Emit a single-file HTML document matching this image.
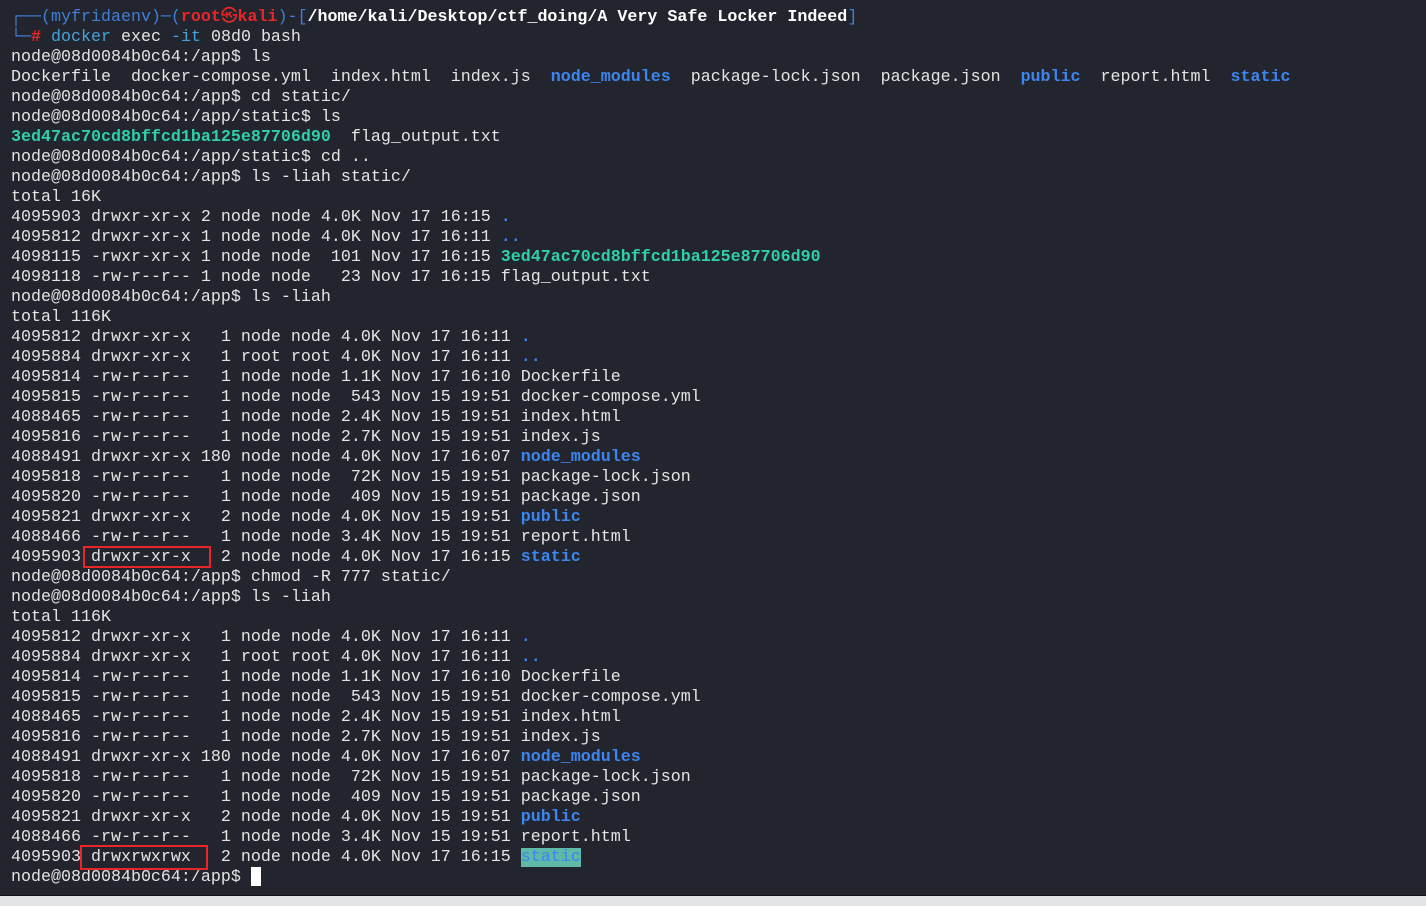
<!DOCTYPE html>
<html><head><meta charset="utf-8"><style>
html,body{margin:0;padding:0;}
body{width:1426px;height:906px;background:#e3e4e5;position:relative;overflow:hidden;}
#t{position:absolute;left:0;top:0;width:1426px;height:895px;background:#23252e;border-bottom:1px solid #111318;}
pre{position:absolute;left:11px;top:8px;margin:0;font-family:"Liberation Mono","DejaVu Sans Mono","Noto Sans CJK SC",monospace;font-size:16.67px;line-height:20px;color:#e4e4e4;white-space:pre;}
.b{color:#3b86f0;font-weight:bold}
.g{color:#2fd0a4;font-weight:bold}
.bl{color:#3f7fd6}
.r{color:#e8262a;font-weight:bold}
.w{color:#fff;font-weight:bold}
.c{color:#44a3d8}
.box{position:absolute;border:2px solid #e8262a;box-sizing:border-box;}
.hl{background:#5fb9a6;color:#3b86f0}
.cur{position:absolute;left:251px;top:867px;width:10px;height:19px;background:#fff;}
</style></head><body>
<div id="t"></div>
<pre><span class="bl">┌──(myfridaenv)─(</span><span class="r">root㉿kali</span><span class="bl">)-[</span><span class="w">/home/kali/Desktop/ctf_doing/A Very Safe Locker Indeed</span><span class="bl">]</span>
<span class="bl">└─</span><span class="r">#</span> <span class="c">docker</span> exec <span class="c">-it</span> 08d0 bash
node@08d0084b0c64:/app$ ls
Dockerfile  docker-compose.yml  index.html  index.js  <span class="b">node_modules</span>  package-lock.json  package.json  <span class="b">public</span>  report.html  <span class="b">static</span>
node@08d0084b0c64:/app$ cd static/
node@08d0084b0c64:/app/static$ ls
<span class="g">3ed47ac70cd8bffcd1ba125e87706d90</span>  flag_output.txt
node@08d0084b0c64:/app/static$ cd ..
node@08d0084b0c64:/app$ ls -liah static/
total 16K
4095903 drwxr-xr-x 2 node node 4.0K Nov 17 16:15 <span class="b">.</span>
4095812 drwxr-xr-x 1 node node 4.0K Nov 17 16:11 <span class="b">..</span>
4098115 -rwxr-xr-x 1 node node  101 Nov 17 16:15 <span class="g">3ed47ac70cd8bffcd1ba125e87706d90</span>
4098118 -rw-r--r-- 1 node node   23 Nov 17 16:15 flag_output.txt
node@08d0084b0c64:/app$ ls -liah
total 116K
4095812 drwxr-xr-x   1 node node 4.0K Nov 17 16:11 <span class="b">.</span>
4095884 drwxr-xr-x   1 root root 4.0K Nov 17 16:11 <span class="b">..</span>
4095814 -rw-r--r--   1 node node 1.1K Nov 17 16:10 Dockerfile
4095815 -rw-r--r--   1 node node  543 Nov 15 19:51 docker-compose.yml
4088465 -rw-r--r--   1 node node 2.4K Nov 15 19:51 index.html
4095816 -rw-r--r--   1 node node 2.7K Nov 15 19:51 index.js
4088491 drwxr-xr-x 180 node node 4.0K Nov 17 16:07 <span class="b">node_modules</span>
4095818 -rw-r--r--   1 node node  72K Nov 15 19:51 package-lock.json
4095820 -rw-r--r--   1 node node  409 Nov 15 19:51 package.json
4095821 drwxr-xr-x   2 node node 4.0K Nov 15 19:51 <span class="b">public</span>
4088466 -rw-r--r--   1 node node 3.4K Nov 15 19:51 report.html
4095903 drwxr-xr-x   2 node node 4.0K Nov 17 16:15 <span class="b">static</span>
node@08d0084b0c64:/app$ chmod -R 777 static/
node@08d0084b0c64:/app$ ls -liah
total 116K
4095812 drwxr-xr-x   1 node node 4.0K Nov 17 16:11 <span class="b">.</span>
4095884 drwxr-xr-x   1 root root 4.0K Nov 17 16:11 <span class="b">..</span>
4095814 -rw-r--r--   1 node node 1.1K Nov 17 16:10 Dockerfile
4095815 -rw-r--r--   1 node node  543 Nov 15 19:51 docker-compose.yml
4088465 -rw-r--r--   1 node node 2.4K Nov 15 19:51 index.html
4095816 -rw-r--r--   1 node node 2.7K Nov 15 19:51 index.js
4088491 drwxr-xr-x 180 node node 4.0K Nov 17 16:07 <span class="b">node_modules</span>
4095818 -rw-r--r--   1 node node  72K Nov 15 19:51 package-lock.json
4095820 -rw-r--r--   1 node node  409 Nov 15 19:51 package.json
4095821 drwxr-xr-x   2 node node 4.0K Nov 15 19:51 <span class="b">public</span>
4088466 -rw-r--r--   1 node node 3.4K Nov 15 19:51 report.html
4095903 drwxrwxrwx   2 node node 4.0K Nov 17 16:15 <span class="hl">static</span>
node@08d0084b0c64:/app$ </pre>
<div class="box" style="left:83px;top:546px;width:128px;height:22px"></div>
<div class="box" style="left:80px;top:845px;width:128px;height:25px"></div>
<div class="cur"></div>
</body></html>
